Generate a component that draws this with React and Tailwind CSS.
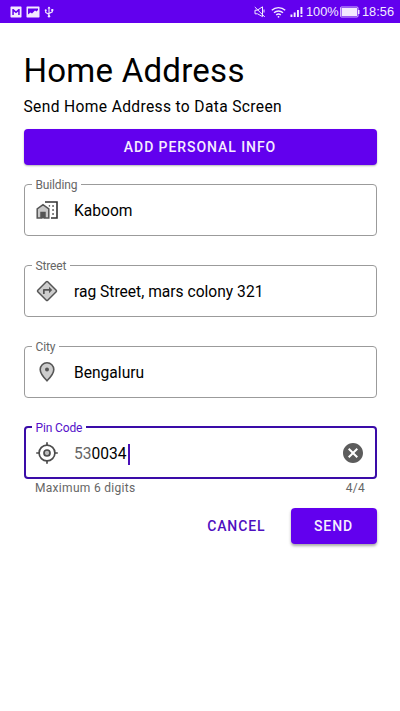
import React from 'react';

const ICON = 'h-6 w-6 shrink-0';

function HomeWorkIcon() {
  return (
    <svg viewBox="0 0 24 24" className={ICON}>
      <path d="M2.200 20V10.900L8 6.700l5.800 4.200V20H10v-5.500H6V20z" fill="#c9c9c9" stroke="#555" strokeWidth="1.500" />
      <path d="M6 14h4v6.500H6z" fill="#555" />
      <path d="M10 4h12v16h-6" fill="none" stroke="#333" strokeWidth="1.600" />
      <path d="M17.300 7.300h1.500v1.500h-1.500zM17.300 11.300h1.500v1.500h-1.500zM17.300 15.300h1.500v1.500h-1.500zM13.800 7.300h1.300v1.300h-1.300z" fill="#333" />
    </svg>
  );
}

function DirectionsIcon() {
  return (
    <svg viewBox="0 0 24 24" className={ICON}>
      <rect x="5" y="5" width="14" height="14" rx="1" transform="rotate(45 12 12)" fill="#cdcdcd" stroke="#555" strokeWidth="1.5" />
      <path d="M8 15v-4c0-.55.45-1 1-1h5V7.800l3.200 3.200-3.200 3.200V11.700H9.700V15z" fill="#555" />
    </svg>
  );
}

function PlaceIcon() {
  return (
    <svg viewBox="0 0 24 24" className={ICON}>
      <path d="M12 2.700a6.800 6.800 0 0 0-6.800 6.800c0 3.800 3.300 7.800 6.800 11.300 3.500-3.500 6.800-7.500 6.800-11.300A6.800 6.800 0 0 0 12 2.700z" fill="#cdcdcd" stroke="#555" strokeWidth="1.600" />
      <circle cx="12" cy="9.500" r="2" fill="#555" />
    </svg>
  );
}

function LocationIcon() {
  return (
    <svg viewBox="0 0 24 24" className={ICON} fill="none" stroke="#4c4c4c" strokeWidth="1.700">
      <circle cx="12" cy="12" r="7.900" />
      <path d="M12 1.200v3M12 19.800v3M1.200 12h3M19.800 12h3" />
      <circle cx="12" cy="12" r="3" fill="#bdbdbd" strokeWidth="1.700" />
    </svg>
  );
}

function ClearIcon() {
  return (
    <svg viewBox="0 0 24 24" className={ICON}>
      <path
        d="M12 2C6.47 2 2 6.47 2 12s4.47 10 10 10 10-4.47 10-10S17.53 2 12 2zm5 13.59L15.59 17 12 13.41 8.41 17 7 15.59 10.59 12 7 8.41 8.41 7 12 10.59 15.59 7 17 8.41 13.41 12z"
        fill="#5c5c5c"
      />
    </svg>
  );
}

function Field({ label, icon, children, active, trailing }) {
  return (
    <fieldset
      className={
        active
          ? 'h-[59px] rounded-[4px] border-2 border-[#3a0ca8] px-[9.500px]'
          : 'mb-[22px] h-[59px] rounded-[4px] border border-[#9b9b9b] px-[10.500px]'
      }
    >
      <legend
        className={
          active
            ? '-ml-[3px] h-[14px] px-[3.500px] text-[12px] leading-[16px] tracking-[-0.140px] text-[#5410c9]'
            : '-ml-[3px] h-[14px] px-[3.500px] text-[12px] leading-[16px] tracking-[-0.140px] text-[#666]'
        }
      >
        {label}
      </legend>
      <div className="flex h-[38px] items-center">
        {icon}
        <div className="ml-[15px] flex flex-1 items-center pt-[3px] text-[15.600px] text-black">
          {children}
        </div>
        {trailing}
      </div>
    </fieldset>
  );
}

function StatusBar() {
  return (
    <header className="flex h-[23px] items-center bg-[#6200ee] pr-[6px] pl-[10px] text-[#f3eaff]">
      <svg viewBox="0 0 12 12" className="h-3 w-3">
        <path fillRule="evenodd" d="M1 .5h10l.5.5v10l-.5.5H1L.5 11V1zM2.300 3v6h1.500V5.400L6 7.200l2.200-1.800V9h1.500V3H8.500L6 5.300 3.500 3z" fill="currentColor" />
      </svg>
      <svg viewBox="0 0 14 12" className="ml-[4px] h-3 w-[14px]">
        <path fillRule="evenodd" d="M1 .5h12l.5.5v10l-.5.5H1L.5 11V1zM2 2.500v6l2.500-2 1.500 1L9 4.500l1.500 1L12 4V2.500z" fill="currentColor" />
      </svg>
      <svg viewBox="0 0 10 12" className="ml-[4px] h-3 w-[10px]" fill="none" stroke="currentColor" strokeWidth="1.1">
        <path d="M5 1v9M5 8.500 1.700 6.500V4M5 7.500l3.300-1.700V3.500" />
        <path d="m3.500 2.500 1.500-2 1.500 2z" fill="currentColor" stroke="none" />
        <circle cx="5" cy="10.300" r="1.200" fill="currentColor" stroke="none" />
        <circle cx="1.700" cy="4.300" r="1" fill="currentColor" stroke="none" />
        <path d="M7.300 3h2v2h-2z" fill="currentColor" stroke="none" />
      </svg>
      <span className="flex-1" />
      <svg viewBox="0 0 12 12" className="mr-[2px] h-3 w-3" fill="none" stroke="currentColor" strokeWidth="1">
        <path d="M1 4.200h2.300L8.500.8v9.800L3.500 7.800H1zM.8 1l10 10M10 3.500v3" />
      </svg>
      <svg viewBox="0 0 15 12" className="ml-[3px] h-3 w-[15px]" fill="none" stroke="currentColor" strokeWidth="1.4">
        <path d="M.8 4.300C4.500.7 10.500.7 14.200 4.300M3 6.800c2.500-2.400 6.500-2.400 9 0M5.200 9.100c1.300-1.200 3.300-1.200 4.600 0" />
        <circle cx="7.500" cy="10.800" r=".9" fill="currentColor" stroke="none" />
      </svg>
      <svg viewBox="0 0 13 12" className="ml-[4px] h-3 w-[13px]" fill="currentColor">
        <path d="M.5 8.500h1.900V11H.5zM3.700 6.500h1.900V11H3.700zM7 4h1.900v7H7zM10.500 1h1.900v7h-1.900zM10.500 9.300h1.900V11h-1.900z" />
      </svg>
      <span className="ml-[3px] w-[33px] pt-[2px] text-[12.800px] leading-none whitespace-nowrap font-['Liberation_Sans',sans-serif]">100%</span>
      <svg viewBox="0 0 20 12" className="ml-[1px] h-3 w-5" fill="currentColor">
        <rect x=".5" y="1" width="17.500" height="10" rx="1" fill="none" stroke="currentColor" strokeWidth=".8" />
        <path d="M1.500 2h15.500v8H1.500zM18 4h1.500v4H18z" />
      </svg>
      <span className="ml-[2px] pt-[2px] text-[12.800px] leading-none font-['Liberation_Sans',sans-serif]">18:56</span>
    </header>
  );
}

export default function App() {
  return (
    <div className="flex h-[711px] w-[400px] flex-col overflow-hidden bg-white font-[Roboto,sans-serif] text-black">
      <StatusBar />
      <main className="flex flex-col px-[23.500px] pt-[27px]">
        <h1 className="h-10 text-[33px] leading-[41px] font-normal tracking-[0.250px] whitespace-nowrap">Home Address</h1>
        <p className="mt-[6px] h-5 text-[15.600px] leading-[22px] tracking-[0.350px]">Send Home Address to Data Screen</p>
        <button className="mt-[13px] mb-3 h-9 rounded-[4px] bg-[#6200ee] pt-px text-[14px] font-medium tracking-[0.930px] text-[#f5edff] shadow-[0_1px_2px_rgba(0,0,0,0.3)]">
          ADD PERSONAL INFO
        </button>
        <Field label="Building" icon={<HomeWorkIcon />}>Kaboom</Field>
        <Field label="Street" icon={<DirectionsIcon />}>rag Street, mars colony 321</Field>
        <Field label="City" icon={<PlaceIcon />}>Bengaluru</Field>
        <Field label="Pin Code" icon={<LocationIcon />} trailing={<ClearIcon />} active>
          <span className="text-[#666]">53</span>0034
          <span className="ml-[1px] h-[21px] w-[2px] bg-[#4a10b8]" />
        </Field>
        <div className="mt-[1px] flex h-[14px] justify-between px-[11.500px] text-[12px] leading-[16px] tracking-[0.300px] text-[#666]">
          <span>Maximum 6 digits</span>
          <span>4/4</span>
        </div>
        <div className="mt-[14px] flex h-9 items-center justify-end">
          <button className="text-[14px] font-medium tracking-[0.900px] text-[#4f10c0]">CANCEL</button>
          <button className="ml-[25px] h-9 w-[86px] rounded-[4px] bg-[#6200ee] text-[14px] font-medium tracking-[0.900px] text-[#f5edff] shadow-[0_2px_3px_rgba(0,0,0,0.35)]">
            SEND
          </button>
        </div>
      </main>
    </div>
  );
}
